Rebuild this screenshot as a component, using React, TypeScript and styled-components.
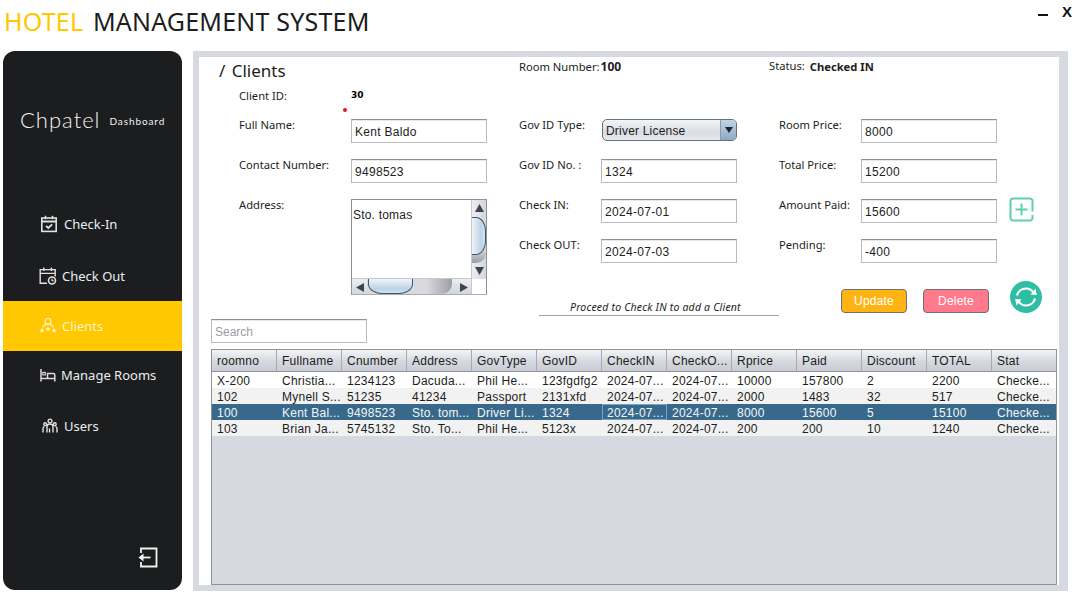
import styled, { createGlobalStyle } from 'styled-components'

const GlobalStyle = createGlobalStyle`
  html, body {
    margin: 0;
    padding: 0;
    background: #fff;
  }
  * {
    box-sizing: border-box;
  }
`

const uiFont = `'Noto Sans', 'Open Sans', sans-serif`
const javaFont = `'Liberation Sans', Arial, sans-serif`

const columns = ['roomno', 'Fullname', 'Cnumber', 'Address', 'GovType', 'GovID', 'CheckIN', 'CheckO...', 'Rprice', 'Paid', 'Discount', 'TOTAL', 'Stat']

const rows = [
  ['X-200', 'Christia...', '1234123', 'Dacuda...', 'Phil He...', '123fgdfg2', '2024-07...', '2024-07...', '10000', '157800', '2', '2200', 'Checke...'],
  ['102', 'Mynell S...', '51235', '41234', 'Passport', '2131xfd', '2024-07...', '2024-07...', '2000', '1483', '32', '517', 'Checke...'],
  ['100', 'Kent Bal...', '9498523', 'Sto. tom...', 'Driver Li...', '1324', '2024-07...', '2024-07...', '8000', '15600', '5', '15100', 'Checke...'],
  ['103', 'Brian Ja...', '5745132', 'Sto. To...', 'Phil He...', '5123x', '2024-07...', '2024-07...', '200', '200', '10', '1240', 'Checke...'],
]

const CheckInIcon = () => (
  <svg width="18" height="18" viewBox="0 0 18 18" fill="none" stroke="#e2e2e2" strokeWidth="1.6">
    <rect x="1.8" y="3" width="14.4" height="13.4" />
    <path d="M1.8 6.500H16.200" strokeWidth="2" />
    <path d="M5.500 .8v3.400M12.500 .8v3.400" />
    <path d="M6 10.800l2.300 2.200 3.900-3.700" strokeWidth="1.800" />
  </svg>
)

const CheckOutIcon = () => (
  <svg width="18" height="18" viewBox="0 0 18 18" fill="none" stroke="#e2e2e2" strokeWidth="1.400">
    <path d="M8 16.300H1.200V2.600h15v7M1.200 6.400h15" />
    <path d="M4.800.4v3.600M12.400.4v3.600" />
    <circle cx="13" cy="13.500" r="3.500" strokeWidth="1.600" />
    <path d="M13 11.500v2.200h1.800" strokeWidth="1.100" />
  </svg>
)

const ClientsIcon = () => (
  <svg width="18" height="18" viewBox="0 0 18 18" fill="#fff3c4">
    <circle cx="9" cy="4.200" r="2.900" fill="none" stroke="#fff3c4" strokeWidth="1.200" />
    <path d="M3.800 10.500c.6-2.300 2.600-3.400 5.200-3.400s4.600 1.100 5.200 3.400" fill="none" stroke="#fff3c4" strokeWidth="1.200" />
    <path d="M3 10.800l.8 1.700 1.800.2-1.300 1.200.4 1.800-1.700-.9-1.700.9.400-1.800L.4 12.700l1.800-.2z" />
    <path d="M9 9.200l.8 1.700 1.800.2-1.300 1.200.4 1.800-1.700-.9-1.700.9.400-1.800-1.300-1.200 1.800-.2z" />
    <path d="M15 10.800l.8 1.700 1.800.2-1.300 1.200.4 1.800-1.700-.9-1.700.9.400-1.800-1.300-1.200 1.800-.2z" />
  </svg>
)

const RoomsIcon = () => (
  <svg width="16" height="14" viewBox="0 0 16 14" fill="none" stroke="#dcdcdc" strokeWidth="1.500">
    <path d="M1 1v12.500M1 10.500h14M14.800 13.500V7a1.500 1.500 0 0 0-1.500-1.500H7.500V10.500" />
    <rect x="2.800" y="4.400" width="2.500" height="2.500" strokeWidth="1.100" />
  </svg>
)

const UsersIcon = () => (
  <svg width="16" height="16" viewBox="0 0 16 16" fill="none" stroke="#e2e2e2" strokeWidth="1.400">
    <circle cx="8" cy="3" r="1.900" />
    <circle cx="3.200" cy="6.200" r="1.400" />
    <circle cx="12.800" cy="6.200" r="1.400" />
    <path d="M5 14.500V8.500c0-1.800 1.300-2.500 3-2.500s3 .7 3 2.500v6M7.500 14.500v-4M1 14.500v-4c0-1 .5-1.800 1.500-1.800M15 14.500v-4c0-1-.5-1.800-1.500-1.800" />
  </svg>
)

const ExitIcon = () => (
  <svg width="20" height="21" viewBox="0 0 20 21" fill="none" stroke="#f2f2f2" strokeWidth="1.800">
    <path d="M3 6V1.500h15.500v18H3V15" />
    <path d="M5 10.500h7.500" />
    <path d="M.5 10.500L5.500 6.500v8z" fill="#f2f2f2" stroke="none" />
  </svg>
)

const PlusIcon = () => (
  <svg width="25" height="25" viewBox="0 0 25 25" fill="none" stroke="#5fd0ae" strokeWidth="2">
    <path d="M23.500 14.500V4a2.500 2.500 0 0 0-2.500-2.500H4A2.500 2.500 0 0 0 1.500 4v17A2.500 2.500 0 0 0 4 23.500h17a2.500 2.500 0 0 0 2.500-2.500v-3" />
    <path d="M12.500 6.500v12M6.500 12.500h12" />
  </svg>
)

const RefreshIcon = () => (
  <svg width="32" height="32" viewBox="0 0 32 32" fill="none">
    <circle cx="16" cy="16" r="16" fill="#2fbda3" />
    <path d="M7 14.500C8 10.500 11.500 7.500 16 7.500c3.200 0 5.800 1.600 7.400 4" stroke="#fff" strokeWidth="2.200" />
    <path d="M20.500 13.500l6.300.6-1.300-6.600z" fill="#fff" />
    <path d="M25 17.500c-1 4-4.500 7-9 7-3.200 0-5.800-1.600-7.400-4" stroke="#fff" strokeWidth="2.200" />
    <path d="M11.500 18.500l-6.300-.6 1.300 6.600z" fill="#fff" />
  </svg>
)

const NavItems = [
  { label: 'Check-In', icon: <CheckInIcon />, pad: 37, gap: 6, lift: 4 },
  { label: 'Check Out', icon: <CheckOutIcon />, pad: 36, gap: 5, lift: 0 },
  { label: 'Clients', icon: <ClientsIcon />, pad: 36, gap: 5, lift: 0, active: true },
  { label: 'Manage Rooms', icon: <RoomsIcon />, pad: 37, gap: 5, lift: 2 },
  { label: 'Users', icon: <UsersIcon />, pad: 39, gap: 6, lift: 0 },
]

export default function App(): JSX.Element {
  return (
    <Page>
      <GlobalStyle />
      <TopBar>
        <Title>
          <span>HOTEL</span> MANAGEMENT SYSTEM
        </Title>
        <WindowControls>
          <Minimize />
          <CloseMark>X</CloseMark>
        </WindowControls>
      </TopBar>
      <Body>
        <Sidebar>
          <Brand>
            <BrandName>Chpatel</BrandName>
            <BrandSub>Dashboard</BrandSub>
          </Brand>
          <Nav>
            {NavItems.map((item) => (
              <NavItem key={item.label} $active={item.active} $pad={item.pad} $gap={item.gap} $lift={item.lift}>
                {item.icon}
                {item.label}
              </NavItem>
            ))}
          </Nav>
          <LogoutRow>
            <ExitIcon />
          </LogoutRow>
        </Sidebar>
        <Panel>
          <PanelHeader>
            <Crumb>/ Clients</Crumb>
            <HeaderInfo>
              <Label>Room Number:</Label>
              <Strong>100</Strong>
            </HeaderInfo>
            <StatusInfo>
              <Label>Status:</Label>
              <StatusValue>Checked IN</StatusValue>
            </StatusInfo>
          </PanelHeader>
          <FormGrid>
            <ClientIdLabel>Client ID:</ClientIdLabel>
            <ClientIdValue>
              30
              <RedDot />
            </ClientIdValue>
            <FirstRowGap />

            <FieldLabel>Full Name:</FieldLabel>
            <Field defaultValue="Kent Baldo" />
            <Spacer />
            <FieldLabel>Gov ID Type:</FieldLabel>
            <Combo>
              <ComboText>Driver License</ComboText>
              <ComboArrow>
                <svg width="8" height="6" viewBox="0 0 8 6">
                  <path d="M0 0h8L4 6z" fill="#1d2733" />
                </svg>
              </ComboArrow>
            </Combo>
            <Spacer />
            <FieldLabel>Room Price:</FieldLabel>
            <Field defaultValue="8000" />
            <Spacer />

            <FieldLabel>Contact Number:</FieldLabel>
            <Field defaultValue="9498523" />
            <Spacer />
            <FieldLabel>Gov ID No. :</FieldLabel>
            <Field defaultValue="1324" />
            <Spacer />
            <FieldLabel>Total Price:</FieldLabel>
            <Field defaultValue="15200" />
            <Spacer />

            <AddressLabel>Address:</AddressLabel>
            <AddressBox>
              <AddressBody>
                <AddressText>Sto. tomas</AddressText>
                <VScroll>
                  <ScrollBtn>
                    <svg width="9" height="8" viewBox="0 0 9 8">
                      <path d="M4.500 0l4.500 8H0z" fill="#3d4650" />
                    </svg>
                  </ScrollBtn>
                  <VTrack>
                    <VFill>
                      <VThumb />
                    </VFill>
                  </VTrack>
                  <ScrollBtn>
                    <svg width="9" height="8" viewBox="0 0 9 8">
                      <path d="M0 0h9L4.500 8z" fill="#3d4650" />
                    </svg>
                  </ScrollBtn>
                </VScroll>
              </AddressBody>
              <HScroll>
                <ScrollBtn>
                  <svg width="8" height="9" viewBox="0 0 8 9">
                    <path d="M0 4.500l8-4.500v9z" fill="#3d4650" />
                  </svg>
                </ScrollBtn>
                <HTrack>
                  <HFill>
                    <HThumb />
                  </HFill>
                </HTrack>
                <ScrollBtn>
                  <svg width="8" height="9" viewBox="0 0 8 9">
                    <path d="M8 4.500L0 0v9z" fill="#3d4650" />
                  </svg>
                </ScrollBtn>
                <Corner />
              </HScroll>
            </AddressBox>
            <Spacer />
            <FieldLabel>Check IN:</FieldLabel>
            <Field defaultValue="2024-07-01" />
            <Spacer />
            <FieldLabel>Amount Paid:</FieldLabel>
            <Field defaultValue="15600" />
            <PlusButton>
              <PlusIcon />
            </PlusButton>

            <CheckOutSlot>
              <FieldLabel>Check OUT:</FieldLabel>
              <Field defaultValue="2024-07-03" />
            </CheckOutSlot>
            <Spacer />
            <FieldLabel>Pending:</FieldLabel>
            <Field defaultValue="-400" />
            <Spacer />

            <Actions>
              <Note>Proceed to Check IN to add a Client</Note>
              <ActionButton $color="#ffb414">Update</ActionButton>
              <ActionButton $color="#ff7a8a">Delete</ActionButton>
              <RefreshButton>
                <RefreshIcon />
              </RefreshButton>
            </Actions>
          </FormGrid>
          <SearchField placeholder="Search" />
          <TableFrame>
            <DataTable>
              <thead>
                <tr>
                  {columns.map((c) => (
                    <HeadCell key={c}>{c}</HeadCell>
                  ))}
                </tr>
              </thead>
              <tbody>
                {rows.map((row, i) => (
                  <DataRow key={row[0]} $selected={i === 2} $alt={i % 2 === 1}>
                    {row.map((cell, j) => (
                      <DataCell key={j} $focus={i === 2 && j === 6}>
                        {cell}
                      </DataCell>
                    ))}
                  </DataRow>
                ))}
              </tbody>
            </DataTable>
          </TableFrame>
        </Panel>
      </Body>
    </Page>
  )
}

const Page = styled.div`
  width: 1072px;
  height: 596px;
  overflow: hidden;
  background: #fff;
`
const TopBar = styled.div`
  height: 51px;
  display: flex;
  justify-content: space-between;
  padding-left: 4px;
`
const Title = styled.div`
  font-family: ${uiFont};
  font-size: 25px;
  letter-spacing: 0.2px;
  line-height: 43px;
  color: #1b1d21;
  white-space: pre;
  span {
    color: #ffc800;
    margin-right: 3px;
  }
`
const WindowControls = styled.div`
  display: flex;
  align-items: flex-start;
  width: 34px;
`
const Minimize = styled.div`
  width: 11px;
  height: 2px;
  background: #111;
  margin-top: 14px;
`
const CloseMark = styled.div`
  font-family: ${javaFont};
  font-weight: 700;
  font-size: 15px;
  line-height: 17px;
  color: #111;
  margin-left: 14px;
  margin-top: 3px;
`
const Body = styled.div`
  display: flex;
  gap: 11px;
  padding-left: 3px;
`
const Sidebar = styled.div`
  width: 179px;
  height: 539px;
  background: #1c1d1f;
  border-radius: 12px;
  display: flex;
  flex-direction: column;
`
const Brand = styled.div`
  height: 150px;
  display: flex;
  align-items: center;
  padding: 0 0 14px 17px;
  color: #f2f2f2;
`
const BrandName = styled.div`
  font-family: Lato, sans-serif;
  font-weight: 300;
  font-size: 22px;
  letter-spacing: 1px;
`
const BrandSub = styled.div`
  font-family: Lato, sans-serif;
  font-size: 10px;
  margin-left: 9px;
  margin-top: 3px;
  letter-spacing: 0.9px;
`
const Nav = styled.div`
  display: flex;
  flex-direction: column;
`
const NavItem = styled.div<{ $active?: boolean; $pad: number; $gap: number; $lift: number }>`
  height: 50px;
  display: flex;
  align-items: center;
  gap: ${({ $gap }) => $gap}px;
  padding-left: ${({ $pad }) => $pad}px;
  padding-bottom: ${({ $lift }) => $lift}px;
  font-family: ${uiFont};
  font-size: 13px;
  color: ${({ $active }) => ($active ? '#fff3c4' : '#e9eef2')};
  background: ${({ $active }) => ($active ? '#ffc800' : 'transparent')};
`
const LogoutRow = styled.div`
  margin-top: auto;
  display: flex;
  justify-content: flex-end;
  padding: 0 24px 22px 0;
`
const Panel = styled.div`
  width: 875px;
  height: 540px;
  background: #fff;
  border: 6px solid #d6d9e0;
  border-right-width: 9px;
  display: flex;
  flex-direction: column;
`
const PanelHeader = styled.div`
  height: 27px;
  display: flex;
  padding-left: 20px;
  color: #1b1d21;
`
const Crumb = styled.div`
  width: 300px;
  font-family: ${uiFont};
  font-size: 17px;
  word-spacing: 2px;
  line-height: 27px;
`
const Label = styled.div`
  font-family: ${uiFont};
  font-size: 11.200px;
  line-height: 13px;
  color: #1b1d21;
  white-space: nowrap;
`
const FieldLabel = styled(Label)`
  margin-top: -1px;
`
const HeaderInfo = styled.div`
  width: 250px;
  display: flex;
  gap: 1px;
  padding-top: 3px;
`
const StatusInfo = styled.div`
  display: flex;
  gap: 5px;
  padding-top: 2px;
`
const Strong = styled.div`
  font-family: ${uiFont};
  font-size: 12px;
  font-weight: 700;
  line-height: 13px;
`
const StatusValue = styled(Strong)`
  font-size: 11.200px;
  padding-top: 1px;
`
const FormGrid = styled.div`
  display: grid;
  grid-template-columns: 112px 136px 32px 82px 136px 42px 82px 136px 36px;
  grid-template-rows: 35px 40px 40px 40px 40px 40px;
  padding-left: 40px;
`
const ClientIdLabel = styled(Label)`
  padding-top: 5px;
`
const ClientIdValue = styled.div`
  position: relative;
  font-family: 'DejaVu Sans', sans-serif;
  font-weight: 700;
  font-size: 9px;
  line-height: 11px;
  padding-top: 6px;
`
const RedDot = styled.span`
  position: absolute;
  left: -8px;
  top: 24px;
  width: 4px;
  height: 4px;
  border-radius: 50%;
  background: #e8112d;
`
const FirstRowGap = styled.div`
  grid-column: 3 / -1;
`
const Spacer = styled.div``
const Field = styled.input`
  width: 136px;
  height: 24px;
  padding: 2px 2px 0 3px;
  margin: 0;
  border: 1px solid #b6b9be;
  border-top-color: #8e9297;
  box-shadow: inset 0 1px 0 #e8e8e8;
  outline: none;
  border-radius: 0;
  background: #fff;
  font-family: ${javaFont};
  font-size: 12px;
  letter-spacing: 0.3px;
  color: #1b1d21;
`
const Combo = styled.div`
  width: 135px;
  height: 22px;
  margin-left: 1px;
  display: flex;
  align-items: center;
  justify-content: space-between;
  border: 1px solid #5f7287;
  border-radius: 5px;
  background: linear-gradient(#f3f4f6, #d9dce2 60%, #e6e8ec);
  overflow: hidden;
`
const ComboText = styled.span`
  padding: 1px 0 0 3px;
  font-family: ${javaFont};
  font-size: 12px;
  letter-spacing: 0.2px;
  color: #1b1d21;
`
const ComboArrow = styled.span`
  width: 16px;
  height: 100%;
  display: flex;
  align-items: center;
  justify-content: center;
  background: linear-gradient(#c3d3e2, #8eaac3);
  border-left: 1px solid #8b9cae;
`
const AddressLabel = styled(FieldLabel)`
  grid-row: 4 / span 3;
`
const AddressBox = styled.div`
  grid-row: 4 / span 3;
  grid-column: 2;
  width: 136px;
  height: 96px;
  border: 1px solid #8e9297;
  border-bottom-color: #a8abb0;
  background: #fff;
  display: flex;
  flex-direction: column;
`
const AddressBody = styled.div`
  flex: 1;
  display: flex;
  min-height: 0;
`
const AddressText = styled.div`
  flex: 1;
  padding: 8px 1px;
  font-family: ${javaFont};
  font-size: 12px;
  letter-spacing: 0.2px;
  line-height: 14px;
  color: #1b1d21;
  border-bottom: 1px solid #c6c8cc;
`
const VScroll = styled.div`
  width: 15px;
  display: flex;
  flex-direction: column;
  background: linear-gradient(90deg, #eceef0, #d3d6dc);
  border-left: 1px solid #c6c8cc;
`
const ScrollBtn = styled.div`
  width: 15px;
  height: 16px;
  flex: none;
  display: flex;
  align-items: center;
  justify-content: center;
`
const VTrack = styled.div`
  flex: 1;
  padding-top: 1px;
`
const VFill = styled.div`
  height: 46px;
  border-radius: 0 0 10px 0;
  background: linear-gradient(#d8dade, #d8dade 70%, #9c9ea3);
`
const VThumb = styled.div`
  height: 38px;
  border: 1px solid #3e5871;
  border-left: none;
  border-radius: 0 10px 10px 0 / 0 14px 14px 0;
  background: linear-gradient(90deg, #eef4f9, #bcd3e6 70%, #d5e3ee);
`
const HScroll = styled.div`
  height: 15px;
  flex: none;
  display: flex;
  background: linear-gradient(#eceef0, #d3d6dc);
`
const HTrack = styled.div`
  flex: 1;
`
const HFill = styled.div`
  width: 85px;
  height: 15px;
  border-radius: 0 0 10px 0;
  background: linear-gradient(90deg, #d8dade, #d8dade 70%, #9c9ea3);
`
const HThumb = styled.div`
  width: 45px;
  height: 15px;
  margin-left: 1px;
  border: 1px solid #3e5871;
  border-top: none;
  border-radius: 0 0 14px 14px / 0 0 10px 10px;
  background: linear-gradient(#eef4f9, #bcd3e6 70%, #d5e3ee);
`
const Corner = styled.div`
  width: 15px;
  flex: none;
  background: #fff;
  border-left: 1px solid #c6c8cc;
`
const PlusButton = styled.div`
  padding-left: 12px;
  margin-top: -2px;
`
const CheckOutSlot = styled.div`
  grid-column: 4 / span 2;
  display: grid;
  grid-template-columns: 82px 136px;
`
const Actions = styled.div`
  grid-column: 4 / -1;
  grid-row: 6;
  display: flex;
  align-items: flex-start;
  padding-left: 20px;
  > * {
    flex: none;
  }
`
const Note = styled.div`
  width: 240px;
  height: 37px;
  margin-right: 62px;
  padding-left: 31px;
  padding-top: 21px;
  border-bottom: 1px solid #9fa2a7;
  font-family: ${uiFont};
  font-style: italic;
  font-size: 10.500px;
  letter-spacing: 0.2px;
  line-height: 14px;
  white-space: nowrap;
  color: #1b1d21;
`
const ActionButton = styled.div<{ $color: string }>`
  width: 66px;
  height: 24px;
  margin-top: 10px;
  margin-right: 16px;
  border: 1px solid #6d6f73;
  border-radius: 4px;
  background: ${({ $color }) => $color};
  color: #fff;
  font-family: ${javaFont};
  font-size: 12px;
  letter-spacing: 0.2px;
  line-height: 22px;
  text-align: center;
`
const RefreshButton = styled.div`
  width: 32px;
  height: 32px;
  margin-top: 2px;
  margin-left: 5px;
`
const SearchField = styled.input`
  width: 156px;
  height: 24px;
  margin: 0 0 6px 12px;
  padding: 2px 3px 0;
  flex: none;
  border: 1px solid #b6b9be;
  border-top-color: #8e9297;
  box-shadow: inset 0 1px 0 #e8e8e8;
  outline: none;
  font-family: ${javaFont};
  font-size: 12px;
  &::placeholder {
    color: #9a9da3;
    opacity: 1;
  }
`
const TableFrame = styled.div`
  width: 846px;
  height: 236px;
  margin-left: 12px;
  border: 1px solid #8e929b;
  background: #d6d9e0;
  overflow: hidden;
`
const DataTable = styled.table`
  width: 845px;
  table-layout: fixed;
  border-collapse: separate;
  border-spacing: 0;
  font-family: ${javaFont};
  font-size: 12px;
  letter-spacing: 0.25px;
`
const HeadCell = styled.th`
  height: 22px;
  padding: 0 0 0 5px;
  text-align: left;
  font-weight: 400;
  white-space: nowrap;
  overflow: hidden;
  color: #1b1d21;
  background: linear-gradient(#f3f4f6, #d5d8de 55%, #c9ccd4);
  border-right: 1px solid #a5a9b2;
  border-bottom: 1px solid #8e929b;
`
const DataRow = styled.tr<{ $selected: boolean; $alt: boolean }>`
  height: 16px;
  background: ${({ $selected, $alt }) => ($selected ? '#39698a' : $alt ? '#f2f2f2' : '#fff')};
  color: ${({ $selected }) => ($selected ? '#f2f6f9' : '#1b1d21')};
`
const DataCell = styled.td<{ $focus: boolean }>`
  height: 16px;
  padding: 1px 0 0 5px;
  line-height: 14px;
  white-space: nowrap;
  overflow: hidden;
  outline: ${({ $focus }) => ($focus ? '1px solid #73a4d1' : 'none')};
  outline-offset: -1px;
`
